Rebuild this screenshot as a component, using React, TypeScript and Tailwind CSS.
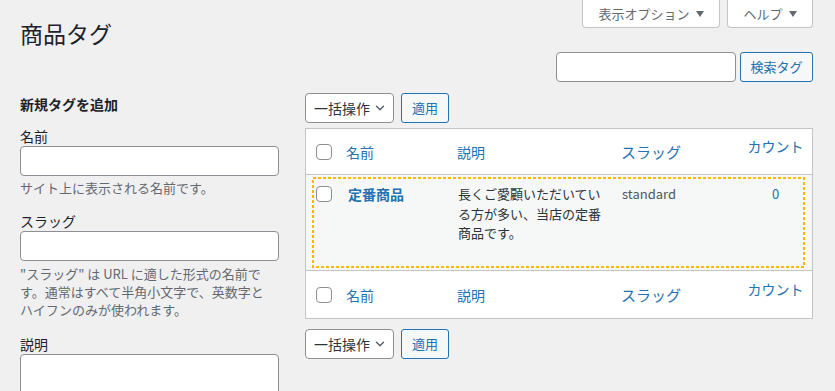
import { ChevronDown } from "lucide-react";

const cols = "grid grid-cols-[30px_111px_164px_128px_73px]";

function Tri() {
  return (
    <svg width="8" height="6" viewBox="0 0 8 6" className="ml-[6px] inline-block">
      <path d="M0 0 H8 L4 6 Z" fill="#646970" />
    </svg>
  );
}

function Checkbox() {
  return <span className="block w-[16px] h-[16px] rounded-[4px] border border-[#8c8f94] bg-white" />;
}

function BulkActions() {
  return (
    <div className="flex items-center gap-[7px]">
      <div className="w-[89px] h-[30px] flex items-center justify-between pl-[8px] pr-[6px] bg-white border border-[#8c8f94] rounded-[4px] text-[14px] text-[#2c3338]">
        <span>一括操作</span>
        <ChevronDown size={14} strokeWidth={2.2} color="#50575e" />
      </div>
      <button className="w-[48px] h-[30px] flex items-center justify-center bg-[#f6f7f7] border border-[#2271b1] rounded-[3px] text-[13px] text-[#2271b1]">
        適用
      </button>
    </div>
  );
}

function HeadRow({ last }: { last?: boolean }) {
  return (
    <div className={`${cols} items-center h-[46px] bg-white text-[14px] leading-[20px] text-[#2271b1] ${last ? "h-[47px]" : "border-b border-[#c3c4c7]"}`}>
      <div className="pl-[10px]">
        <Checkbox />
      </div>
      <div className="pl-[10px]">名前</div>
      <div className="pl-[10px]">説明</div>
      <div className="pl-[10px] text-[15px]">スラッグ</div>
      <div className="text-center mb-[12px]">カウント</div>
    </div>
  );
}

// keyboard focus ring drawn over the row
function FocusRing() {
  return (
    <svg className="absolute left-[6px] right-[7px] top-[2px] bottom-[2px] w-[493px] h-[91px] pointer-events-none" viewBox="0 0 493 91">
      <rect x="1" y="1" width="491" height="89" fill="none" stroke="#ffb900" strokeWidth="2" strokeDasharray="3 2" />
    </svg>
  );
}

export default function App() {
  return (
    <div className="w-[835px] h-[391px] overflow-hidden bg-[#f0f0f1] px-[20px] font-['Noto_Sans_CJK_JP',sans-serif] text-[#1d2327]">
      {/* header */}
      <div className="flex justify-between">
        <h1 className="pt-[18px] text-[23px] leading-[30px] font-normal">商品タグ</h1>
        <div className="flex gap-[7px] pr-[2px]">
          <div className="w-[138px] h-[28px] flex items-center justify-center bg-white border-x border-b border-[#c3c4c7] rounded-b-[4px] text-[13px] text-[#646970]">
            表示オプション
            <Tri />
          </div>
          <div className="w-[86px] h-[28px] flex items-center justify-center bg-white border-x border-b border-[#c3c4c7] rounded-b-[4px] text-[13px] text-[#646970]">
            ヘルプ
            <Tri />
          </div>
        </div>
      </div>

      {/* search */}
      <div className="flex justify-end gap-[4px] mt-[4px] pr-[2px]">
        <div className="w-[180px] h-[30px] bg-white border border-[#8c8f94] rounded-[4px]" />
        <button className="w-[73px] h-[30px] flex items-center justify-center bg-[#f6f7f7] border border-[#2271b1] rounded-[3px] text-[13px] text-[#2271b1]">
          検索タグ
        </button>
      </div>

      <div className="flex gap-[26px] mt-[11px]">
        {/* add form */}
        <div className="w-[259px] shrink-0">
          <h2 className="text-[14px] leading-[22px] font-semibold">新規タグを追加</h2>
          <div className="mt-[11px] text-[14px] leading-[20px]">名前</div>
          <div className="h-[30px] bg-white border border-[#8c8f94] rounded-[4px]" />
          <p className="mt-[3px] text-[13px] leading-[18px] text-[#646970]">サイト上に表示される名前です。</p>
          <div className="mt-[14px] text-[14px] leading-[20px]">スラッグ</div>
          <div className="h-[30px] bg-white border border-[#8c8f94] rounded-[4px]" />
          <p className="mt-[4px] text-[13px] leading-[18px] text-[#646970] whitespace-nowrap">
            "スラッグ" は URL に適した形式の名前で
            <br />
            す。通常はすべて半角小文字で、英数字と
            <br />
            ハイフンのみが使われます。
          </p>
          <div className="mt-[15px] text-[14px] leading-[20px]">説明</div>
          <div className="h-[60px] bg-white border border-[#8c8f94] rounded-[4px]" />
        </div>

        {/* list */}
        <div className="w-[508px]">
          <BulkActions />
          <div className="mt-[5px] border border-[#c3c4c7]">
            <HeadRow />
            <div className={`${cols} relative items-start h-[96px] pt-[9px] bg-[#f6f7f7] border-b border-[#c3c4c7] text-[13px] leading-[20px]`}>
              <div className="pl-[10px] h-[20px] flex items-center">
                <Checkbox />
              </div>
              <div className="pl-[12px] text-[14px] font-bold text-[#2271b1]">定番商品</div>
              <div className="pl-[11px] leading-[19.5px] text-[#2c3338] whitespace-nowrap">
                長くご愛顧いただいてい
                <br />
                る方が多い、当店の定番
                <br />
                商品です。
              </div>
              <div className="pl-[11px] text-[#50575e]">standard</div>
              <div className="text-center text-[#2271b1]">0</div>
              <FocusRing />
            </div>
            <HeadRow last />
          </div>
          <div className="mt-[10px]">
            <BulkActions />
          </div>
        </div>
      </div>
    </div>
  );
}
